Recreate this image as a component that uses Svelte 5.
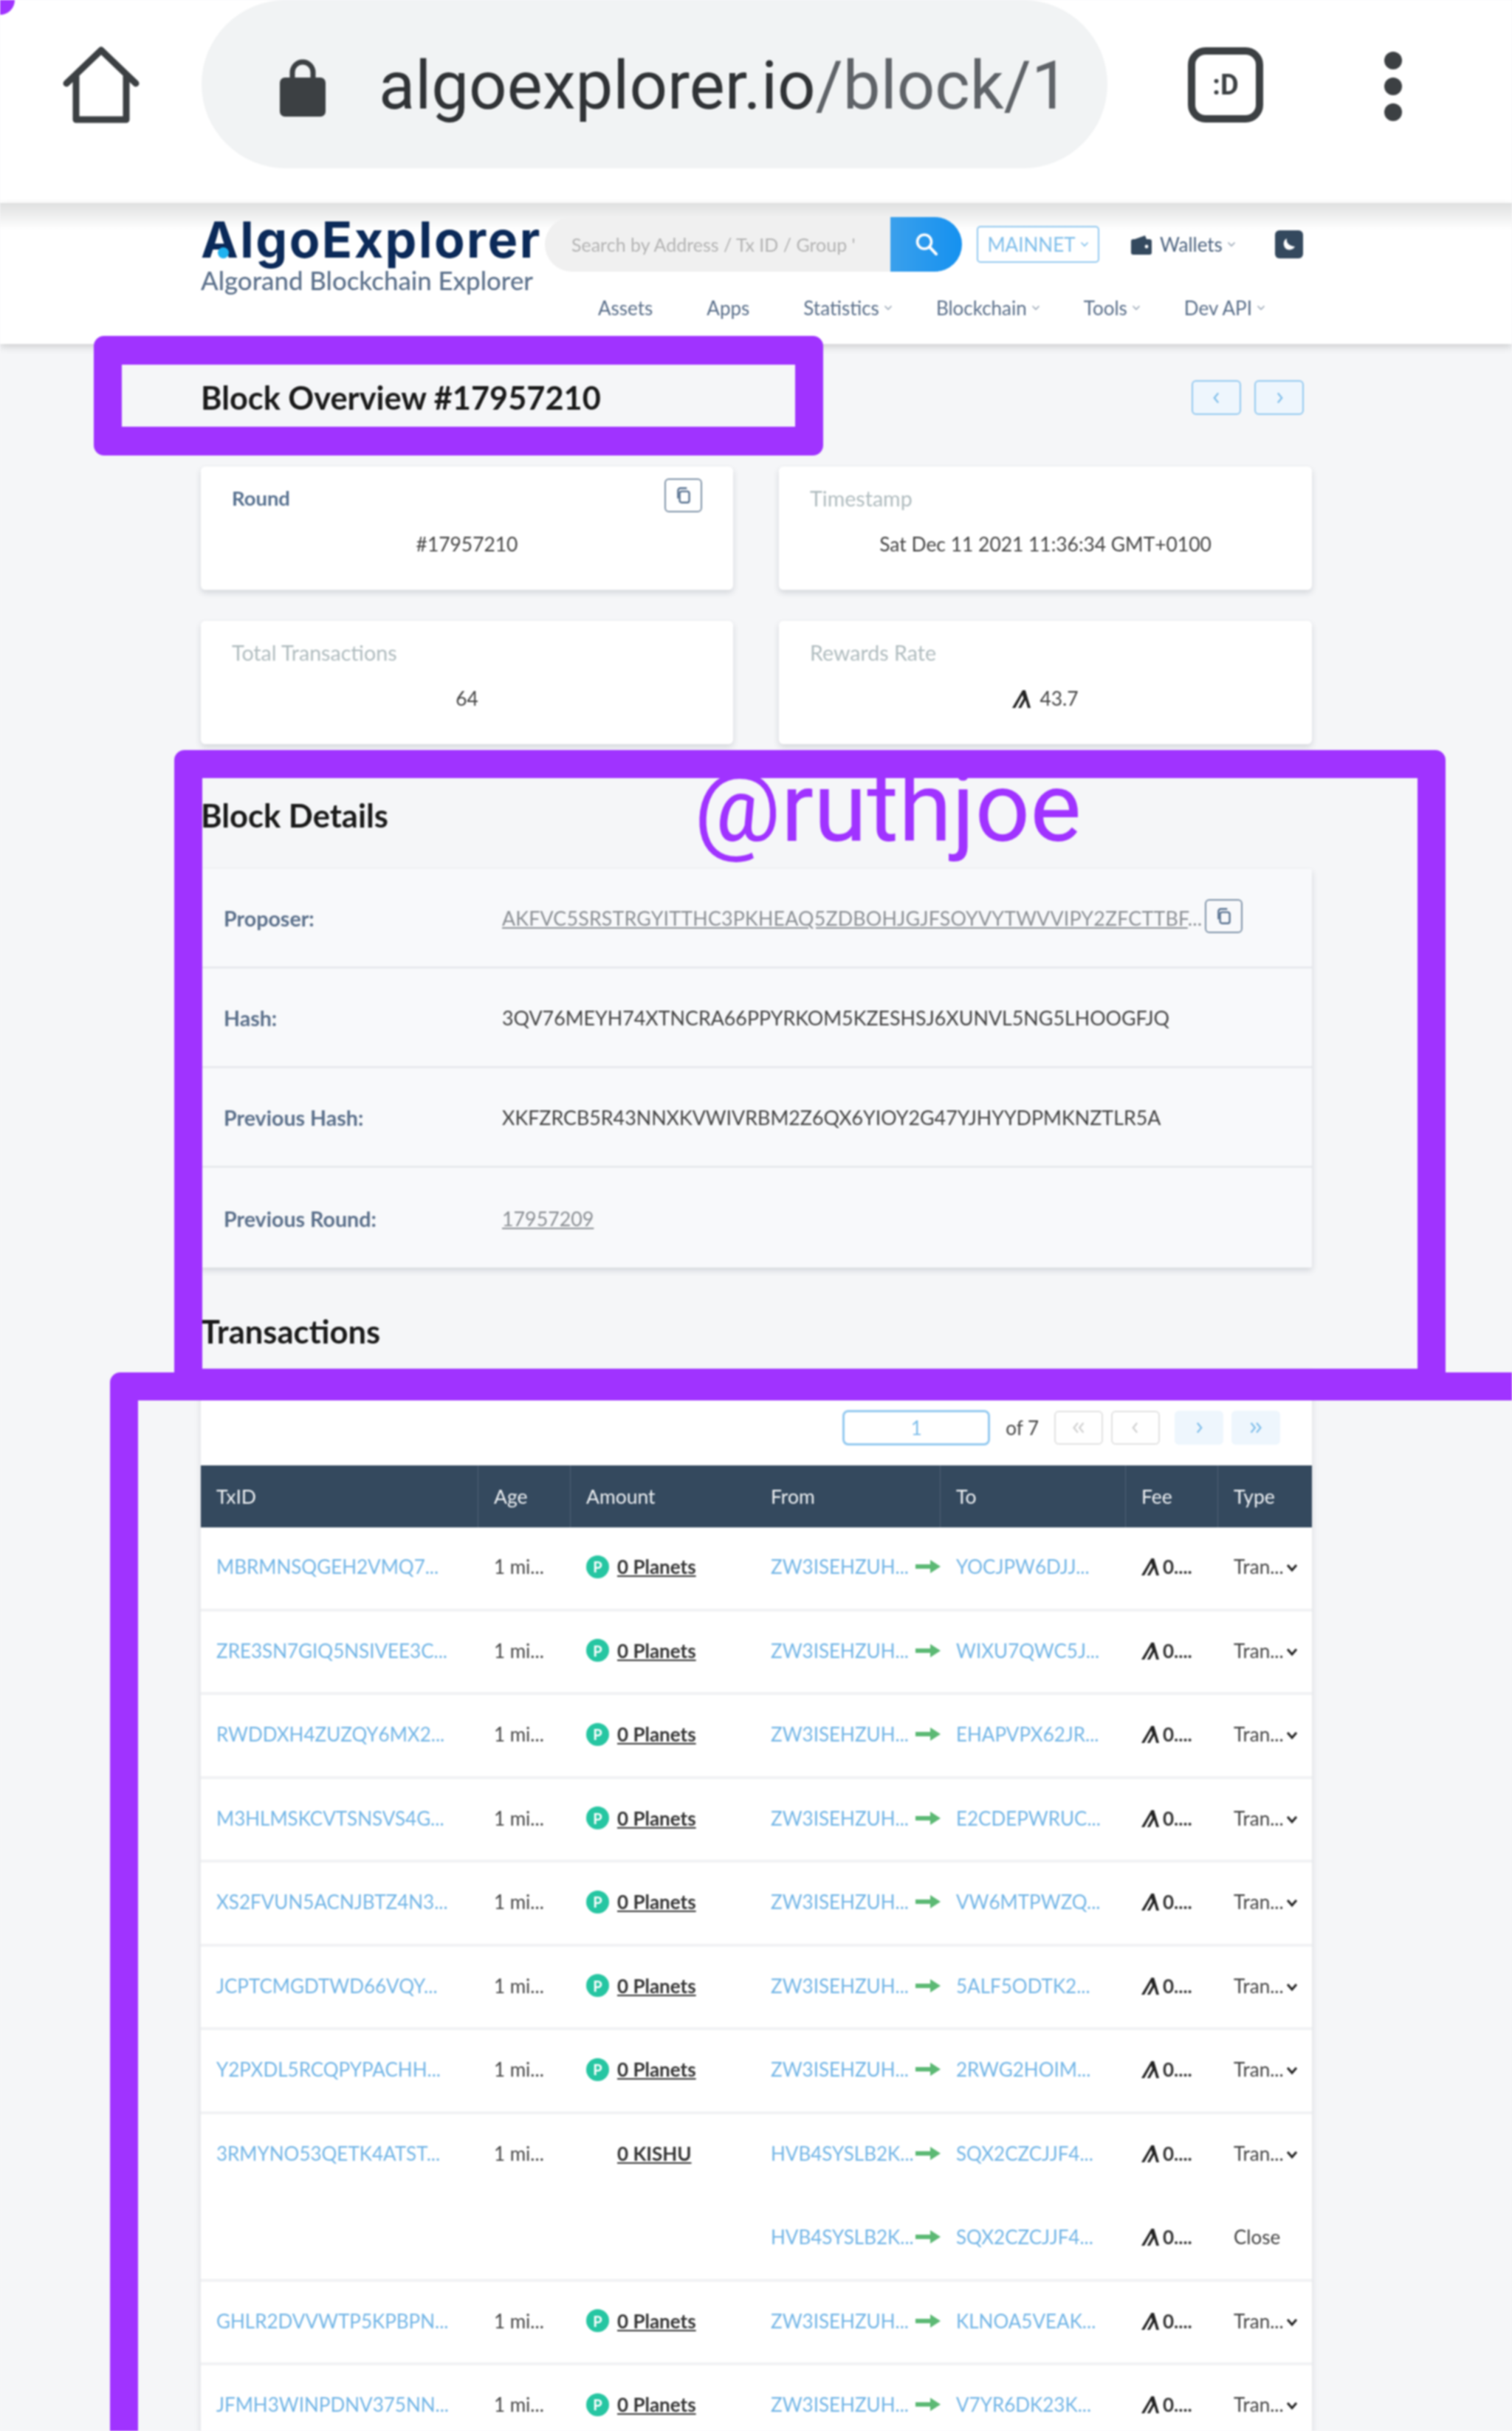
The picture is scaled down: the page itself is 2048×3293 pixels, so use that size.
<script>
  const stats = [
    { label: 'Round', value: '#17957210', dark: true, copy: true },
    { label: 'Timestamp', value: 'Sat Dec 11 2021 11:36:34 GMT+0100' },
    { label: 'Total Transactions', value: '64' },
    { label: 'Rewards Rate', value: '43.7', algo: true }
  ];

  const navItems = [
    { name: 'Assets' },
    { name: 'Apps' },
    { name: 'Statistics', caret: true },
    { name: 'Blockchain', caret: true },
    { name: 'Tools', caret: true },
    { name: 'Dev API', caret: true }
  ];

  const columns = ['TxID', 'Age', 'Amount', 'From', 'To', 'Fee', 'Type'];
  const from = 'ZW3ISEHZUH...';

  const txns = [
    { id: 'MBRMNSQGEH2VMQ7...', to: 'YOCJPW6DJJ...' },
    { id: 'ZRE3SN7GIQ5NSIVEE3C...', to: 'WIXU7QWC5J...' },
    { id: 'RWDDXH4ZUZQY6MX2...', to: 'EHAPVPX62JR...' },
    { id: 'M3HLMSKCVTSNSVS4G...', to: 'E2CDEPWRUC...' },
    { id: 'XS2FVUN5ACNJBTZ4N3...', to: 'VW6MTPWZQ...' },
    { id: 'JCPTCMGDTWD66VQY...', to: '5ALF5ODTK2...' },
    { id: 'Y2PXDL5RCQPYPACHH...', to: '2RWG2HOIM...' },
    { id: '3RMYNO53QETK4ATST...', from: 'HVB4SYSLB2K...', to: 'SQX2CZCJJF4...', kishu: true },
    { from: 'HVB4SYSLB2K...', to: 'SQX2CZCJJF4...', close: true },
    { id: 'GHLR2DVVWTP5KPBPN...', to: 'KLNOA5VEAK...' },
    { id: 'JFMH3WINPDNV375NN...', to: 'V7YR6DK23K...' }
  ];
</script>

{#snippet algoIcon()}
  <svg class="algo" viewBox="0 0 24 24" aria-hidden="true"><path d="M0 24 13.5 1h3.6l6.9 23h-3.8l-2.9-10.3L11.6 24H7.8l7-12.4-1.3-4.6L4 24z" fill="#222" /></svg>
{/snippet}

{#snippet copyBtn()}
  <span class="copy">
    <svg viewBox="0 0 24 24" width="26" height="26" aria-hidden="true"><rect x="7" y="7" width="12" height="14" rx="2.5" fill="none" stroke="#56708f" stroke-width="2.2" /><path d="M5 16V6a3 3 0 0 1 3-3h8" fill="none" stroke="#56708f" stroke-width="2.2" /></svg>
  </span>
{/snippet}

{#snippet caret()}
  <svg class="caret" viewBox="0 0 12 8" aria-hidden="true"><path d="M1.5 1.5 6 6l4.5-4.5" fill="none" stroke="currentColor" stroke-width="1.6" /></svg>
{/snippet}

{#snippet chev(dir, color, double)}
  <svg class="chev" viewBox="0 0 24 24" aria-hidden="true">
    {#if dir === 'l'}
      <path d={double ? 'M11 6 6 12l5 6M18 6l-5 6 5 6' : 'M14 6l-5 6 5 6'} fill="none" stroke={color} stroke-width="2" />
    {:else}
      <path d={double ? 'M6 6l5 6-5 6M13 6l5 6-5 6' : 'M10 6l5 6-5 6'} fill="none" stroke={color} stroke-width="2" />
    {/if}
  </svg>
{/snippet}

<div class="screen">
  <div class="chrome">
    <svg class="home" viewBox="0 0 104 104" aria-hidden="true"><path d="M5 50 52 5l47 45M18 40v59h68V40" fill="none" stroke="#3c4043" stroke-width="9" stroke-linejoin="round" stroke-linecap="round" /></svg>
    <div class="url">
      <svg class="lock" viewBox="0 0 62 80" aria-hidden="true"><path d="M17 30V20a14 14 0 0 1 28 0v10" fill="none" stroke="#3c4043" stroke-width="7" /><rect x="0" y="27" width="62" height="53" rx="7" fill="#3c4043" /></svg>
      <span class="host">algoexplorer.io<span class="path">/block/1</span></span>
    </div>
    <div class="tabs">:D</div>
    <div class="dots"><i></i><i></i><i></i></div>
  </div>

  <header class="topbar">
    <div class="brand">
      <div class="logo">AlgoExplorer<i class="logodot"></i></div>
      <div class="tagline">Algorand Blockchain Explorer</div>
    </div>
    <div class="topright">
      <div class="toolrow">
        <div class="search">
          <span class="placeholder">Search by Address / Tx ID / Group '</span>
          <span class="searchbtn">
            <svg viewBox="0 0 32 32" width="38" height="38" aria-hidden="true"><circle cx="13.5" cy="13" r="8" fill="none" stroke="#fff" stroke-width="3" /><path d="m19.5 19 7.5 8" stroke="#fff" stroke-width="3.4" stroke-linecap="round" /></svg>
          </span>
        </div>
        <span class="network">MAINNET{@render caret()}</span>
        <span class="wallets">
          <svg viewBox="0 0 30 30" width="30" height="30" aria-hidden="true"><path d="M6 8 20 3l2 5z" fill="#34495e" /><rect x="1" y="8" width="28" height="21" rx="3" fill="#34495e" /><circle cx="22" cy="18" r="2.4" fill="#fff" /></svg>
          Wallets{@render caret()}
        </span>
        <span class="theme">
          <svg viewBox="0 0 24 24" width="24" height="24" aria-hidden="true"><path d="M9 4c-1 5 2 10 11 11-2 4-8 6-12 3S3 7 9 4z" fill="#fff" /></svg>
        </span>
      </div>
      <nav class="nav">
        {#each navItems as item}
          <span class:has-caret={item.caret}>{item.name}{#if item.caret}{@render caret()}{/if}</span>
        {/each}
      </nav>
    </div>
  </header>

  <main class="content">
    <div class="titlerow">
      <h1>Block Overview #17957210</h1>
      <div class="pager">
        <span class="navbtn">{@render chev('l', '#7dbdea')}</span>
        <span class="navbtn">{@render chev('r', '#7dbdea')}</span>
      </div>
    </div>

    <section class="stats">
      {#each stats as s}
        <div class="stat">
          <div class="stat-label" class:dark={s.dark}>{s.label}</div>
          {#if s.copy}<div class="stat-copy">{@render copyBtn()}</div>{/if}
          <div class="stat-value">{#if s.algo}{@render algoIcon()}{/if}{s.value}</div>
        </div>
      {/each}
    </section>

    <h2 class="details-title">Block Details</h2>
    <section class="details">
      <div class="drow">
        <span class="dlabel">Proposer:</span>
        <span class="dvalue proposer"><u>AKFVC5SRSTRGYITTHC3PKHEAQ5ZDBOHJGJFSOYVYTWVVIPY2ZFCTTBF</u>...{@render copyBtn()}</span>
      </div>
      <div class="drow">
        <span class="dlabel">Hash:</span>
        <span class="dvalue dark">3QV76MEYH74XTNCRA66PPYRKOM5KZESHSJ6XUNVL5NG5LHOOGFJQ</span>
      </div>
      <div class="drow">
        <span class="dlabel">Previous Hash:</span>
        <span class="dvalue dark">XKFZRCB5R43NNXKVWIVRBM2Z6QX6YIOY2G47YJHYYDPMKNZTLR5A</span>
      </div>
      <div class="drow">
        <span class="dlabel">Previous Round:</span>
        <span class="dvalue"><u>17957209</u></span>
      </div>
    </section>

    <h2 class="tx-title">Transactions</h2>
    <section class="txcard">
      <div class="paging">
        <span class="pageinput">1</span>
        <span class="of">of 7</span>
        <span class="pbtn off">{@render chev('l', '#cfcfcf', true)}</span>
        <span class="pbtn off">{@render chev('l', '#cfcfcf')}</span>
        <span class="pbtn on first-on">{@render chev('r', '#7dbdea')}</span>
        <span class="pbtn on">{@render chev('r', '#7dbdea', true)}</span>
      </div>

      <div class="thead">
        {#each columns as c}<span>{c}</span>{/each}
      </div>

      {#each txns as t}
        <div class="trow" class:nodiv={t.kishu}>
          <span class="link">{t.id ?? ''}</span>
          <span>{t.id ? '1 mi...' : ''}</span>
          <span class="amount">
            {#if t.kishu}
              <b class="kishu">0 KISHU</b>
            {:else if !t.close}
              <i class="planet">P</i><b>0 Planets</b>
            {/if}
          </span>
          <span class="fromcell"><span class="link">{t.from ?? from}</span>
            <svg class="arrow" viewBox="0 0 34 20" aria-hidden="true"><path d="M0 7h20V1l14 9-14 9v-6H0z" fill="#5cb974" /></svg>
          </span>
          <span class="link">{t.to}</span>
          <span class="fee">{@render algoIcon()}0....</span>
          <span class="type">
            {#if t.close}Close{:else}Tran...<svg class="typecaret" viewBox="0 0 16 12" aria-hidden="true"><path d="M2 2l6 7 6-7" fill="none" stroke="#222" stroke-width="3" /></svg>{/if}
          </span>
        </div>
      {/each}
    </section>
  </main>

  <!-- the purple marks are drawn over the screenshot -->
  <div class="corner"></div>
  <div class="mark mark-title"></div>
  <div class="mark mark-details"></div>
  <div class="mark mark-table"></div>
  <div class="handle">@ruthjoe</div>
</div>

<style>
  :global(body) {
    margin: 0;
    background: #f5f6f8;
  }

  .screen {
    position: relative;
    width: 2048px;
    height: 3293px;
    overflow: hidden;
    background: #f5f6f8;
    font-family: Lato, "Open Sans", sans-serif;
    color: #444;
    filter: blur(0.8px);
  }

  /* browser chrome */
  .chrome {
    display: flex;
    align-items: flex-start;
    height: 275px;
    background: #fff;
  }

  .home {
    width: 104px;
    height: 104px;
    margin: 63px 0 0 85px;
  }

  .url {
    display: flex;
    align-items: center;
    width: 1227px;
    height: 228px;
    margin-left: 84px;
    border-radius: 114px;
    background: #f1f3f4;
  }

  .lock {
    width: 62px;
    height: 80px;
    margin-left: 106px;
    transform: translateY(4px);
  }

  .host {
    margin-left: 72px;
    font: 90.5px Roboto, sans-serif;
    color: #303336;
    transform: translateY(2px);
  }

  .path {
    color: #5f6368;
  }

  .tabs {
    display: flex;
    align-items: center;
    justify-content: center;
    box-sizing: border-box;
    width: 102px;
    height: 102px;
    margin: 64px 0 0 109px;
    border: 10px solid #3c4043;
    border-radius: 24px;
    font: bold 38px Roboto, sans-serif;
    color: #3c4043;
  }

  .dots {
    display: flex;
    flex-direction: column;
    gap: 11px;
    margin: 70px 0 0 164px;
  }

  .dots i {
    width: 24px;
    height: 24px;
    border-radius: 50%;
    background: #3c4043;
  }

  /* site header */
  .topbar {
    display: flex;
    box-sizing: border-box;
    height: 191px;
    padding-left: 272px;
    background: linear-gradient(#dfe0e0, #fff 36px);
    box-shadow: 0 4px 10px rgba(0, 0, 0, 0.16);
    position: relative;
  }

  .brand {
    width: 466px;
    padding-top: 13px;
  }

  .logo {
    position: relative;
    font: 700 68px/72px Inter, sans-serif;
    letter-spacing: 2.5px;
    color: #0b2a59;
    white-space: nowrap;
  }

  .logodot {
    position: absolute;
    left: 23px;
    top: 47px;
    width: 15px;
    height: 15px;
    border-radius: 50%;
    background: #1fb2f0;
  }

  .tagline {
    font: 500 34.8px/40px Lato, sans-serif;
    color: #5a6f8a;
    white-space: nowrap;
  }

  .toolrow {
    display: flex;
    align-items: center;
    height: 74px;
    margin-top: 19px;
  }

  .search {
    display: flex;
    align-items: center;
    width: 565px;
    height: 74px;
    border-radius: 37px;
    background: #f0f0f0;
  }

  .placeholder {
    flex: 1;
    padding-left: 36px;
    font-size: 25px;
    color: #b3b3b3;
    white-space: nowrap;
    overflow: hidden;
  }

  .searchbtn {
    display: flex;
    align-items: center;
    justify-content: center;
    width: 97px;
    height: 74px;
    border-radius: 0 37px 37px 0;
    background: linear-gradient(90deg, #3aa0ec, #1591f0);
  }

  .network {
    display: flex;
    align-items: center;
    justify-content: center;
    box-sizing: border-box;
    width: 166px;
    height: 50px;
    margin-left: 20px;
    border: 2px solid #93c9f0;
    border-radius: 5px;
    font-size: 26px;
    color: #7dbdea;
  }

  .caret {
    width: 12px;
    height: 8px;
    margin-left: 6px;
    color: #9aa7b5;
  }

  .network .caret {
    color: #7dbdea;
  }

  .wallets {
    display: flex;
    align-items: center;
    gap: 10px;
    margin-left: 42px;
    font-size: 26px;
    color: #4d6480;
  }

  .wallets .caret {
    margin-left: -4px;
  }

  .theme {
    display: flex;
    align-items: center;
    justify-content: center;
    width: 38px;
    height: 38px;
    margin-left: 53px;
    border-radius: 6px;
    background: #34495e;
  }

  .nav {
    display: flex;
    align-items: center;
    height: 36px;
    margin: 31px 0 0 72px;
    font-size: 26px;
    color: #5a6f8a;
  }

  .nav span {
    display: flex;
    align-items: center;
    margin-right: 73px;
  }

  .nav span.has-caret {
    margin-right: 59px;
  }

  /* main column */
  .content {
    width: 1505px;
    margin-left: 272px;
  }

  .titlerow {
    display: flex;
    align-items: center;
    justify-content: space-between;
    height: 47px;
    margin: 49px 11px 70px 0;
  }

  h1 {
    margin: 0;
    font: 700 43.3px/47px Lato, sans-serif;
    color: #1a1a1a;
  }

  .pager {
    display: flex;
    gap: 18px;
  }

  .navbtn {
    display: flex;
    align-items: center;
    justify-content: center;
    box-sizing: border-box;
    width: 67px;
    height: 47px;
    border: 2px solid #93c9f0;
    border-radius: 6px;
    background: #eef6fd;
  }

  .chev {
    width: 26px;
    height: 26px;
  }

  .stats {
    display: grid;
    grid-template-columns: 721px 722px;
    column-gap: 62px;
    row-gap: 42px;
  }

  .stat {
    position: relative;
    box-sizing: border-box;
    height: 167px;
    padding: 28px 42px 0;
    border-radius: 6px;
    background: #fff;
    box-shadow: 0 4px 9px rgba(40, 50, 70, 0.16);
  }

  .stat-label {
    font-size: 28.6px;
    line-height: 30px;
    color: #b0bcbf;
  }

  .stat-label.dark {
    font-weight: 700;
    font-size: 27.4px;
    color: #56708f;
  }

  .stat-copy {
    position: absolute;
    top: 16px;
    right: 42px;
  }

  .stat-value {
    display: flex;
    align-items: center;
    justify-content: center;
    gap: 12px;
    margin-top: 32px;
    font-size: 26.4px;
    line-height: 30px;
    color: #444;
  }

  .copy {
    display: inline-flex;
    align-items: center;
    justify-content: center;
    box-sizing: border-box;
    width: 51px;
    height: 46px;
    border: 2px solid #7f93a8;
    border-radius: 6px;
  }

  .algo {
    width: 25px;
    height: 25px;
    flex: none;
  }

  h2 {
    margin: 0;
    font: 700 43.5px/60px Lato, sans-serif;
    color: #1a1a1a;
  }

  .details-title {
    margin: 66px 0 43px;
  }

  .details {
    border-radius: 2px;
    background: #f8f9fb;
    box-shadow: 0 4px 9px rgba(40, 50, 70, 0.16);
  }

  .drow {
    display: flex;
    align-items: center;
    box-sizing: border-box;
    height: 135px;
    padding: 2px 0 0 31px;
    border-bottom: 3px solid #e8eaee;
    font-size: 26.8px;
  }

  .drow:last-child {
    border-bottom: 0;
  }

  .dlabel {
    width: 377px;
    font-size: 28.6px;
    font-weight: 700;
    color: #5a6f8a;
  }

  .dvalue {
    position: relative;
    color: #8b8f94;
    white-space: nowrap;
  }

  .dvalue.dark {
    color: #444;
  }

  .proposer {
    letter-spacing: 0.18px;
  }

  .dvalue .copy {
    position: absolute;
    top: -10px;
    left: 952px;
  }

  .tx-title {
    margin: 56px 0 26px;
  }

  .txcard {
    background: #fff;
    box-shadow: 0 0 9px rgba(40, 50, 70, 0.14);
  }

  .paging {
    display: flex;
    align-items: center;
    justify-content: flex-end;
    height: 48px;
    padding: 51px 43px 27px 0;
    font-size: 26px;
  }

  .pageinput {
    box-sizing: border-box;
    width: 200px;
    height: 48px;
    border: 3px solid #93c9f0;
    border-radius: 8px;
    font-size: 26px;
    line-height: 42px;
    text-align: center;
    color: #7dbdea;
  }

  .of {
    margin: 0 21px;
  }

  .pbtn {
    display: flex;
    align-items: center;
    justify-content: center;
    box-sizing: border-box;
    width: 66px;
    height: 46px;
    margin-left: 11px;
    border-radius: 6px;
  }

  .pbtn.off {
    border: 2px solid #e2e2e2;
  }

  .pbtn.off:nth-child(3) {
    margin-left: 0;
  }

  .pbtn.on {
    background: #eef6fd;
  }

  .pbtn.first-on {
    margin-left: 20px;
  }

  .thead,
  .trow {
    display: grid;
    grid-template-columns: 376px 125px 250px 251px 251px 125px 127px;
  }

  .thead {
    height: 84px;
    background: #34495e;
    color: #eef1f4;
    font-size: 26.5px;
  }

  .thead span {
    padding-left: 21px;
    line-height: 84px;
    border-right: 1px solid #4f6276;
  }

  .thead span:nth-child(3) {
    border-right: 0;
  }

  .thead span:last-child {
    border-right: 0;
  }

  .trow {
    box-sizing: border-box;
    height: 113.5px;
    padding-top: 38px;
    border-bottom: 4px solid #f1f2f4;
    font-size: 26px;
    line-height: 30px;
    white-space: nowrap;
    color: #444;
  }

  .trow.nodiv {
    border-bottom: 0;
  }

  .trow > span {
    display: flex;
    align-items: center;
    padding-left: 21px;
    height: 30px;
  }

  .link {
    color: #72b5e6;
  }

  .amount b {
    font-weight: 700;
    color: #333;
    text-decoration: underline;
  }

  .amount .kishu {
    margin-left: 42px;
  }

  .planet {
    display: flex;
    align-items: center;
    justify-content: center;
    width: 31px;
    height: 31px;
    margin-right: 11px;
    border-radius: 50%;
    background: #26c6a2;
    color: #fff;
    font: 700 20px Lato, sans-serif;
  }

  .fromcell {
    position: relative;
  }

  .arrow {
    position: absolute;
    right: 0;
    top: 5px;
    width: 34px;
    height: 20px;
  }

  .fee {
    gap: 5px;
    font-weight: 700;
    color: #333;
  }

  .trow .algo {
    width: 24px;
    height: 24px;
  }

  .type {
    position: relative;
  }

  .typecaret {
    position: absolute;
    left: 92px;
    top: 11px;
    width: 16px;
    height: 12px;
  }

  /* annotations */
  .corner {
    position: absolute;
    left: -20px;
    top: -20px;
    width: 40px;
    height: 40px;
    border-radius: 50%;
    background: #a033ff;
  }

  .mark {
    position: absolute;
    box-sizing: border-box;
    border: 38px solid #a033ff;
    border-radius: 14px;
  }

  .mark-title {
    left: 127px;
    top: 455px;
    width: 988px;
    height: 162px;
    border-width: 39px 38px;
  }

  .mark-details {
    left: 236px;
    top: 1016px;
    width: 1722px;
    height: 876px;
  }

  .mark-table {
    left: 149px;
    top: 1859px;
    width: 1940px;
    height: 1600px;
  }

  .handle {
    position: absolute;
    left: 940px;
    top: 1024px;
    font: 131px/140px Roboto, sans-serif;
    color: #a033ff;
    white-space: nowrap;
  }
</style>
